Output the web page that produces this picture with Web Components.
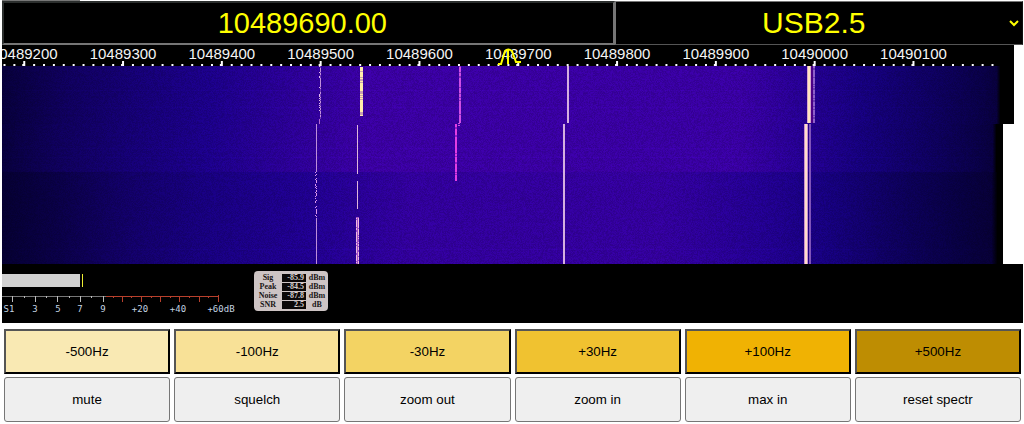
<!DOCTYPE html>
<html lang="en">
<head>
<meta charset="utf-8">
<title>WebSDR receiver</title>
<style>
html { background: #fff; }
body { margin: 0; font-family: "Liberation Sans", Arial, sans-serif; }
</style>
</head>
<body>
<sdr-receiver>
  <sdr-tuner slot="tuner"></sdr-tuner>
  <sdr-dial slot="display"></sdr-dial>
  <sdr-waterfall slot="display"></sdr-waterfall>
  <sdr-meter slot="meter"></sdr-meter>
  <sdr-button slot="keys" tone="#f9e9b3">-500Hz</sdr-button>
  <sdr-button slot="keys" tone="#f8e197">-100Hz</sdr-button>
  <sdr-button slot="keys" tone="#f3d363">-30Hz</sdr-button>
  <sdr-button slot="keys" tone="#f0c230">+30Hz</sdr-button>
  <sdr-button slot="keys" tone="#f0b203">+100Hz</sdr-button>
  <sdr-button slot="keys" tone="#be8d02">+500Hz</sdr-button>
  <sdr-button slot="keys">mute</sdr-button>
  <sdr-button slot="keys">squelch</sdr-button>
  <sdr-button slot="keys">zoom out</sdr-button>
  <sdr-button slot="keys">zoom in</sdr-button>
  <sdr-button slot="keys">max in</sdr-button>
  <sdr-button slot="keys">reset spectr</sdr-button>
</sdr-receiver>
<script>
function define(name, html, ready) {
  customElements.define(name, class extends HTMLElement {
    constructor() {
      super();
      this.attachShadow({ mode: 'open' }).innerHTML = html;
    }
    connectedCallback() { if (ready) ready(this, this.shadowRoot); }
  });
}

define('sdr-receiver', `
<style>
  :host { display: block; }
  .edge { height: 1px; width: 78px; margin-left: 2px; background: #777; }
  .screen { margin: 0 1px 0 2px; }
  .display { display: flow-root; padding-right: 9px; }
  .meter { background: #000; }
  .keys { display: grid; grid-template-columns: repeat(6, minmax(0, 1fr)); gap: 3px 4px; padding: 6px 3px 2px 4px; }
</style>
<div class="edge"></div>
<div class="screen">
  <slot name="tuner"></slot>
  <div class="display"><slot name="display"></slot></div>
  <div class="meter"><slot name="meter"></slot></div>
</div>
<div class="keys"><slot name="keys"></slot></div>`);

define('sdr-tuner', `
<style>
  :host { display: grid; grid-template-columns: 3fr 2fr; background: #000; }
  input, select {
    box-sizing: border-box; width: 100%; height: 44px; margin: 0; border-radius: 0;
    background: #000; color: #ff0; font: 29px "Liberation Sans", Arial, sans-serif;
    text-align: center; text-align-last: center; appearance: none; outline: 0;
  }
  input { border: 2px solid; border-color: #2c2f2e #767676 #767676 #2c2f2e; padding: 0 12px 0 0; }
  select { border: 1px solid; border-color: #767676 #111 #555 #767676; padding: 0 10px 2px 0; font-size: 30px; }
  .mode { position: relative; }
  svg { position: absolute; right: 4px; top: 18px; }
</style>
<input type="text" aria-label="Frequency" value="10489690.00">
<div class="mode">
  <select aria-label="Mode"><option>USB2.5</option></select>
  <svg width="10" height="8" pointer-events="none" aria-hidden="true"><path d="M1 2 5 6 9 2" fill="none" stroke="#ff0" stroke-width="2"/></svg>
</div>`);

define('sdr-dial', `
<style>
  :host { display: block; background: #000; }
  .dial { display: block; width: 100%; height: 21px; overflow: hidden; }
  .marker { overflow: visible; }
  text { font: 15px "Liberation Sans", Arial, sans-serif; fill: #f4f4f4; text-anchor: middle; }
  rect { fill: #fff; }
</style>
<svg class="dial"><g class="scale"></g>
  <svg class="marker" x="50%"><path d="M-10 19H-7L-3 6Q0 3 4 6L8 17H13M0 5V19" fill="none" stroke="#ff0" stroke-width="2"/></svg>
</svg>`, (el, root) => {
  // Positions in percent of the dial: one minor step is 10 kHz.
  const first = 2.1, step = 0.9763;
  let out = '';
  for (let i = -2; i < 99; i++) {
    const x = (first + i * step).toFixed(3) + '%';
    const major = i % 10 === 0 && i >= 0;
    out += major
      ? `<rect x="${x}" y="16" width="2" height="5"/><rect x="${x}" y="19" width="2" height="2" transform="translate(-1)"/>`
      : `<rect x="${x}" y="19" width="2" height="2"/>`;
    if (major) out += `<text x="${x}" dx="1" y="14">${10489200 + i * 10}</text>`;
  }
  root.querySelector('.scale').innerHTML = out;
});

define('sdr-waterfall', `
<style>
  :host { display: block; }
  canvas { display: block; width: 100%; height: 198px; }
</style>
<canvas width="1012" height="198" role="img" aria-label="Waterfall"></canvas>`, (el, root) => {
  const W = 1012, H = 198, ctx = root.querySelector('canvas').getContext('2d');
  let seed = 7;
  const rnd = () => (seed = (seed * 1664525 + 1013904223) >>> 0) / 4294967296;
  const lerp = (stops, v) => {
    for (let i = 1; i < stops.length; i++) {
      if (v <= stops[i][0]) {
        const a = stops[i - 1], b = stops[i], t = (v - a[0]) / (b[0] - a[0]);
        return a.slice(1).map((c, k) => c + (b[k + 1] - c) * t);
      }
    }
    return stops[stops.length - 1].slice(1);
  };
  const upper = [[0, 7, 0, 58], [60, 15, 0, 90], [130, 21, 0, 114], [210, 28, 0, 136], [300, 45, 0, 150], [370, 58, 0, 160],
    [740, 56, 0, 160], [800, 38, 0, 145], [860, 22, 0, 124], [930, 14, 0, 94], [980, 9, 0, 70], [994, 8, 0, 60], [998, 0, 0, 0], [W, 0, 0, 0]];
  const lower = [[0, 5, 0, 48], [60, 10, 0, 70], [130, 18, 0, 102], [210, 24, 0, 126], [310, 32, 0, 142], [410, 49, 0, 154],
    [660, 51, 0, 155], [760, 35, 0, 144], [830, 22, 0, 124], [910, 12, 0, 86], [960, 8, 0, 66], [993, 7, 0, 54], [999, 0, 0, 0], [W, 0, 0, 0]];
  const img = ctx.createImageData(W, H);
  const base = [[], []];
  for (let x = 0; x < W; x++) { base[0][x] = lerp(upper, x); base[1][x] = lerp(lower, x); }
  for (let y = 0; y < H; y++) {
    const row = [24, 41, 82, 91, 183].includes(y) ? 1.06 : 1 + (rnd() - .5) * .02;
    for (let x = 0; x < W; x++) {
      const sx = y >= 58 ? Math.min(W - 1, x + 4) : x;
      const c = base[y < 106 ? 0 : 1][sx], k = row + (rnd() - .5) * .2, p = (y * W + x) * 4;
      img.data[p] = c[0] * k; img.data[p + 1] = 0; img.data[p + 2] = c[2] * k;
      img.data[p + 3] = y >= 58 && x >= 1001 ? 0 : 255;
    }
  }
  ctx.putImageData(img, 0, 0);
  const line = (x, y0, y1, w, color) => { ctx.fillStyle = color; ctx.fillRect(x, y0, w, y1 - y0); };
  const broken = (x, y0, y1, w, color, wobble) => {
    for (let y = y0; y < y1; y++) if (rnd() > .22) line(x + (rnd() < wobble ? -1 : 0), y, y + 1, w, color);
  };
  // Carriers; everything received before the retune sits four pixels to the left.
  broken(318, 0, 53, 1, '#e2b8ec', .25);
  line(318, 0, 53, 1, '#a66ccc88');
  line(317, 53, 58, 1, '#b266d0');
  line(314, 58, 106, 1, '#bd8dda');
  broken(314, 106, 152, 1, '#d996ec', .4);
  line(314, 152, H, 1, '#bd8dda');
  line(358, 1, 50, 3, '#c8a0b0');
  broken(358, 1, 50, 3, '#ffedab', 0);
  line(355, 59, 108, 1, '#e0b6dc');
  line(355, 115, 143, 1, '#e0b6dc');
  line(354, 151, H, 3, '#a050c8');
  broken(354, 151, H, 1, '#f0b8df', 0);
  broken(356, 151, H, 1, '#f0b8df', 0);
  line(457, 0, 57, 2, '#8330bb');
  broken(457, 0, 57, 2, '#d04de5', 0);
  broken(456, 57, 60, 2, '#d04de5', 0);
  line(453, 58, 115, 2, '#9720c7');
  broken(453, 58, 115, 2, '#e23ee4', 0);
  line(565, 0, 57, 2, '#d5afe0');
  line(561, 58, H, 2, '#d5afe0');
  line(805, 0, 57, 4, '#d7a6cc');
  line(806, 0, 57, 2, '#ffe4bd');
  line(809, 0, 57, 2, '#4b0087');
  line(811, 0, 57, 2, '#693ab0');
  broken(811, 0, 57, 2, '#8e60c8', 0);
  line(802, 58, H, 4, '#c98fce');
  line(803, 58, H, 2, '#ffdecb');
  line(807, 58, H, 2, '#8054b9');
});

define('sdr-meter', `
<style>
  :host { display: flex; align-items: flex-start; gap: 16px; height: 59px; background: #000; }
  svg { display: block; flex: none; }
  text { font: 9px "DejaVu Sans Mono", monospace; fill: #c3d3e0; text-anchor: middle; }
  table { margin-top: 7px; border-collapse: collapse; background: #cdc4c4; border-radius: 4px; overflow: hidden; font: bold 8px/9px "Liberation Serif", serif; color: #181414; }
  th, td { padding: 0; height: 9px; text-align: center; font-weight: bold; }
  tr:first-child > * { padding-top: 2px; }
  tr:last-child > * { padding-bottom: 2px; }
  th { width: 28px; }
  td:nth-child(2) { width: 24px; }
  td:nth-child(3) { width: 22px; }
  span { display: block; height: 8px; line-height: 8px; background: #0b0808; color: #d8cece; text-align: right; padding-right: 2px; }
</style>
<svg width="236" height="59" role="img" aria-label="Signal strength">
  <path d="M0 10H78V23H0z" fill="#d2d2d2"/><path d="M80 10h1v13h-1z" fill="#ee3"/>
  <path d="M0 32.500H104" stroke="#777"/>
  <path d="M104 32.500H217" stroke="#b8402c"/>
  <path d="M10.500 32v6M33.500 32v6M55.500 32v6M78.500 32v6M101.500 32v6M22.500 32v2M44.500 32v2M67.500 32v2M89.500 32v2" stroke="#bbb"/>
  <path d="M120.500 32v6M139.500 32v6M158.500 32v6M177.500 32v6M197.500 32v6M216.500 31v7M111.500 32v2M129.500 32v2M149.500 32v2M168.500 32v2M187.500 32v2M206.500 32v2" stroke="#b8402c"/>
  <text x="7" y="48">S1</text><text x="33" y="48">3</text><text x="56" y="48">5</text><text x="78" y="48">7</text><text x="101" y="48">9</text>
  <text x="138" y="48">+20</text><text x="176" y="48">+40</text><text x="219" y="48">+60dB</text>
</svg>
<table>
  <tr><th scope="row">Sig</th><td><span>-85.9</span></td><td>dBm</td></tr>
  <tr><th scope="row">Peak</th><td><span>-84.5</span></td><td>dBm</td></tr>
  <tr><th scope="row">Noise</th><td><span>-87.8</span></td><td>dBm</td></tr>
  <tr><th scope="row">SNR</th><td><span>2.5</span></td><td>dB</td></tr>
</table>`);

define('sdr-button', `
<style>
  :host { display: block; }
  button {
    box-sizing: border-box; display: block; width: 100%; height: 45px; margin: 0; padding: 0;
    font-family: "Liberation Sans", Arial, sans-serif; color: #000;
    background: #efefef; border: 1px solid #767676; border-radius: 3px;
  }
  :host([tone]) button { background: var(--tone); border: 2px solid; border-color: #555 #000 #000 #555; border-radius: 0; }
</style>
<button type="button"><slot></slot></button>`, (el, root) => {
  if (el.hasAttribute('tone')) root.querySelector('button').style.setProperty('--tone', el.getAttribute('tone'));
});
</script>
</body>
</html>
